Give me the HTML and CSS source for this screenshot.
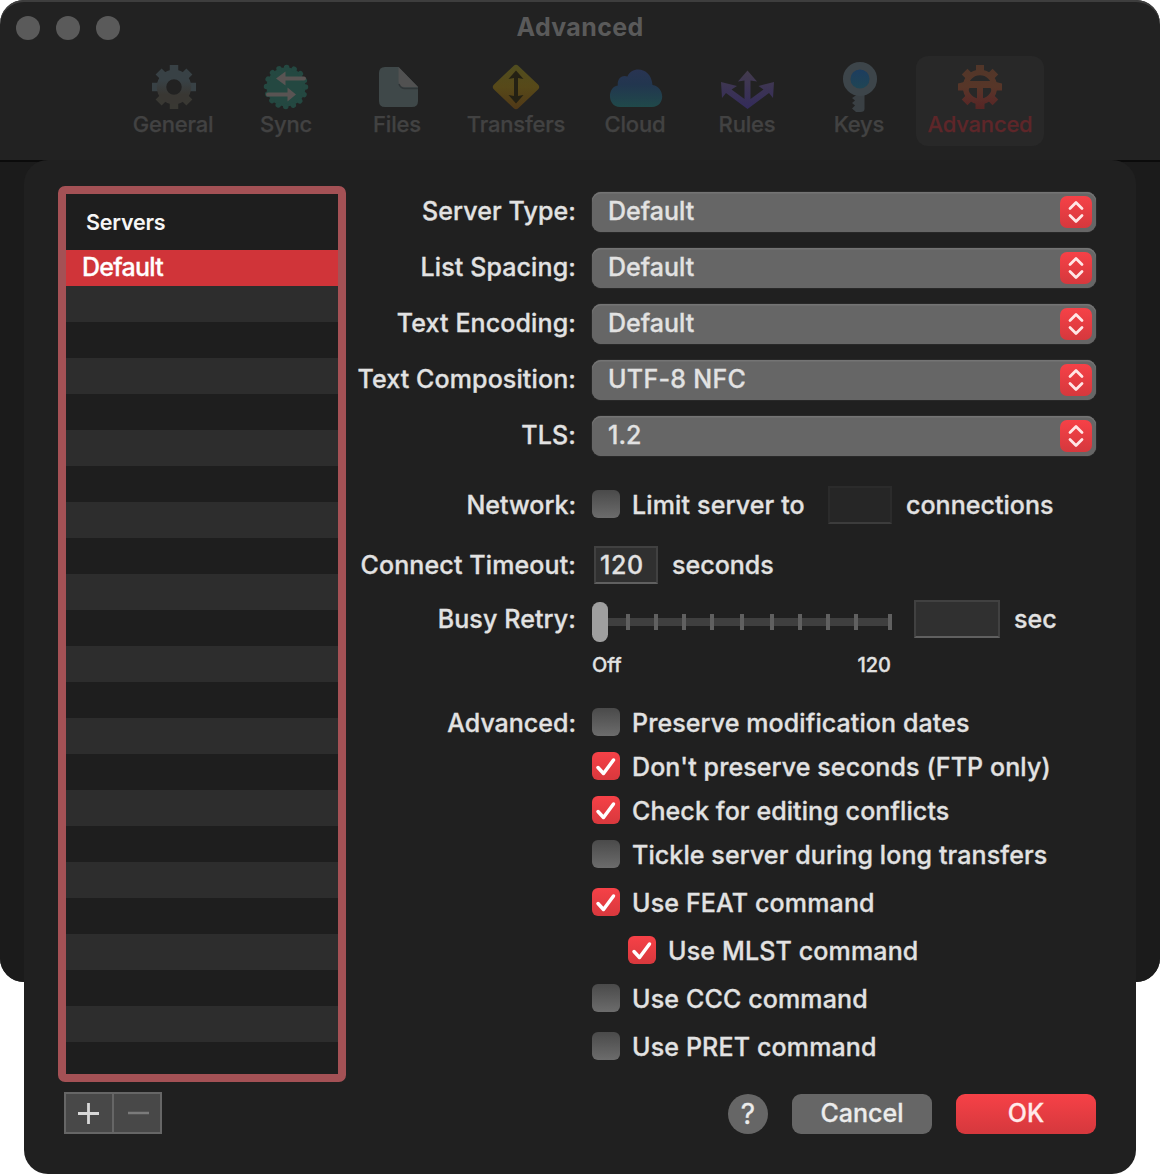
FILE: index.html
```
<!DOCTYPE html>
<html lang="en">
<head>
<meta charset="utf-8">
<title>Advanced</title>
<link rel="stylesheet" href="styles.css">
</head>
<body>
<main class="stage">
  <section class="window">
    <header class="titlebar">
      <div class="lights"><i class="light"></i><i class="light"></i><i class="light"></i></div>
      <h1 class="title">Advanced</h1>
    </header>
    <nav class="toolbar">
      <div class="tab tab-general">
        <svg class="icon" viewBox="0 0 56 56"><defs><linearGradient id="gg" x1="0" y1="0" x2="0" y2="1"><stop offset="0.25" stop-color="#384145"/><stop offset="0.8" stop-color="#393733"/></linearGradient></defs>
          <g fill="none" stroke="#384145" stroke-width="8.500" stroke-linecap="butt"><path d="M28 6v10M12.600 12.600l7 7M6 28h10M43.400 12.600l-7 7M40 28h10"/><path d="M28 40v10M12.600 43.400l7-7M43.400 43.400l-7-7" stroke="#393833"/></g>
          <circle cx="28" cy="28" r="12.500" fill="none" stroke="url(#gg)" stroke-width="9.500"/></svg>
        <span class="tab-label">General</span>
      </div>
      <div class="tab tab-sync">
        <svg class="icon" viewBox="0 0 56 56"><circle cx="28" cy="28" r="19.500" fill="#244841"/><circle cx="28" cy="28" r="19.500" fill="none" stroke="#244841" stroke-width="5.500" stroke-linecap="round" stroke-dasharray="0.100 7.558"/>
          <path d="M18 19.500l9.500-7v5H46q2 0 2 2t-2 2H27.500v5zM38 35.500l-8.500-7v5H10q-2 0-2 2t2 2h19.500v5z" fill="#595453"/></svg>
        <span class="tab-label">Sync</span>
      </div>
      <div class="tab tab-files">
        <svg class="icon" viewBox="0 0 56 56"><path d="M16 8h13.500L49 28v14q0 6-6 6H16q-6 0-6-6V14q0-6 6-6z" fill="#3f4849"/><path d="M29.500 8L49 28H35q-5.500 0-5.500-6z" fill="#515151"/><path d="M30 25q1.500 4.500 6 4.500h13" fill="none" stroke="#303638" stroke-width="1.500"/></svg>
        <span class="tab-label">Files</span>
      </div>
      <div class="tab tab-transfers">
        <svg class="icon" viewBox="0 0 56 56"><defs><linearGradient id="gt" x1="0" y1="0" x2="0" y2="1"><stop offset="0" stop-color="#504d1f"/><stop offset="0.5" stop-color="#574919"/><stop offset="1" stop-color="#503817"/></linearGradient></defs>
          <path d="M25.500 7q2.500-2.500 5 0L50 25.500q2.500 2.500 0 5L30.500 49q-2.500 2.500-5 0L6 30.500q-2.500-2.500 0-5z" fill="url(#gt)"/><path d="M28 11.500l7.500 8.500-5.500-1v18l5.500-1L28 44.500 20.500 36l5.500 1V19l-5.500 1z" fill="#242114"/></svg>
        <span class="tab-label">Transfers</span>
      </div>
      <div class="tab tab-cloud">
        <svg class="icon" viewBox="0 0 56 56"><defs><linearGradient id="gc" x1="0" y1="0" x2="0" y2="1"><stop offset="0" stop-color="#293452"/><stop offset="0.400" stop-color="#22364f"/><stop offset="1" stop-color="#20494a"/></linearGradient></defs>
          <path d="M13 48C0 48 0 28 10.800 26.500 10 19 15.500 15.500 20.500 17.500c4-10.500 23.500-10 25 8.500 13 2 13 22-.5 22z" fill="url(#gc)"/></svg>
        <span class="tab-label">Cloud</span>
      </div>
      <div class="tab tab-rules">
        <svg class="icon" viewBox="0 0 56 56"><defs><linearGradient id="gr" x1="0" y1="12" x2="0" y2="50" gradientUnits="userSpaceOnUse"><stop offset="0" stop-color="#433b4d"/><stop offset="1" stop-color="#332b5b"/></linearGradient></defs>
          <path d="M28.500 11.500l9.500 11-6.500-1v18.500l13-9.500-5-3.500L55 23l-1 16-4-5L28.500 50 7 34l-4 5L2 23l16 4-5.500 3.500L25.500 40V21.500l-6.500 1z" fill="url(#gr)"/></svg>
        <span class="tab-label">Rules</span>
      </div>
      <div class="tab tab-keys">
        <svg class="icon" viewBox="0 0 56 56"><defs><linearGradient id="gk" x1="0" y1="0" x2="0" y2="1"><stop offset="0" stop-color="#1c3b61"/><stop offset="1" stop-color="#204752"/></linearGradient></defs>
          <path d="M25.500 32h8v18q0 3-4 3h-4.500l-4-3.500 3-3-3-2.500 3-2.500-3-2.500 4.500-3z" fill="#3a4044"/><circle cx="29" cy="20" r="13.300" fill="url(#gk)" stroke="#3d454a" stroke-width="7.500"/></svg>
        <span class="tab-label">Keys</span>
      </div>
      <div class="tab tab-advanced">
        <svg class="icon" viewBox="0 0 56 56"><defs><linearGradient id="ga" x1="0" y1="6" x2="0" y2="50" gradientUnits="userSpaceOnUse"><stop offset="0" stop-color="#513629"/><stop offset="0.500" stop-color="#573628"/><stop offset="0.750" stop-color="#592d28"/><stop offset="1" stop-color="#562524"/></linearGradient></defs>
          <g fill="none" stroke="url(#ga)"><circle cx="28" cy="28" r="14.500" stroke-width="5.500"/><path d="M12.600 12.600l6 6M43.400 12.600l-6 6M12.600 43.400l6-6M43.400 43.400l-6-6" stroke-width="8"/></g><path d="M24 6h8v9h-8zM25 26h6v14h1.500v10h-9V40H25zM6 24.500l10-2.500h24l10 2.500v7H40l-1.500-2.500h-21L16 31.500H6z" fill="url(#ga)"/></svg>
        <span class="tab-label">Advanced</span>
      </div>
    </nav>
    <div class="window-body"></div>
  </section>

  <section class="sheet">
    <div class="content">
      <div class="servers">
        <div class="servers-head">Servers</div>
        <div class="server selected">Default</div>
        <div class="stripes"></div>
      </div>
      <form class="form">
        <div class="row row-select"><label class="name">Server Type:</label><div class="select"><span class="val">Default</span><span class="stepper"><svg viewBox="0 0 32 32"><path d="M10 12.500l6-6 6 6M10 19.500l6 6 6-6"/></svg></span></div></div>
        <div class="row row-select"><label class="name">List Spacing:</label><div class="select"><span class="val">Default</span><span class="stepper"><svg viewBox="0 0 32 32"><path d="M10 12.500l6-6 6 6M10 19.500l6 6 6-6"/></svg></span></div></div>
        <div class="row row-select"><label class="name">Text Encoding:</label><div class="select"><span class="val">Default</span><span class="stepper"><svg viewBox="0 0 32 32"><path d="M10 12.500l6-6 6 6M10 19.500l6 6 6-6"/></svg></span></div></div>
        <div class="row row-select"><label class="name">Text Composition:</label><div class="select"><span class="val val-utf">UTF-8 NFC</span><span class="stepper"><svg viewBox="0 0 32 32"><path d="M10 12.500l6-6 6 6M10 19.500l6 6 6-6"/></svg></span></div></div>
        <div class="row row-select"><label class="name">TLS:</label><div class="select"><span class="val">1.2</span><span class="stepper"><svg viewBox="0 0 32 32"><path d="M10 12.500l6-6 6 6M10 19.500l6 6 6-6"/></svg></span></div></div>

        <div class="row row-network"><label class="name name-tight">Network:</label><div class="line"><i class="check"></i><span class="check-text limit">Limit server to</span><span class="field field-dim"></span><span class="unit">connections</span></div></div>
        <div class="row row-timeout"><label class="name">Connect Timeout:</label><div class="line"><span class="field field-timeout">120</span><span class="unit">seconds</span></div></div>
        <div class="row row-busy"><label class="name">Busy Retry:</label><div class="line">
          <svg class="slider" viewBox="0 0 300 42"><path d="M8 17h290v8H8z" fill="#3f3f3f"/><path d="M36 13v16M64 13v16M92 13v16M120 13v16M150 13v16M180 13v16M208 13v16M236 13v16M264 13v16M298 13v16" stroke="#606060" stroke-width="4"/><rect x="0" y="1" width="16" height="40" rx="7.500" fill="#9f9f9f"/></svg>
          <span class="field field-busy"></span><span class="unit">sec</span></div></div>
        <div class="scale"><span>Off</span><span>120</span></div>

        <div class="row row-advanced"><label class="name name-tight">Advanced:</label>
          <div class="checks">
            <div class="option"><i class="check"></i><span class="check-text">Preserve modification dates</span></div>
            <div class="option"><i class="check on"><svg viewBox="0 0 28 28"><path d="M6 15.500l5.500 6L21.500 8"/></svg></i><span class="check-text">Don't preserve seconds (FTP only)</span></div>
            <div class="option"><i class="check on"><svg viewBox="0 0 28 28"><path d="M6 15.500l5.500 6L21.500 8"/></svg></i><span class="check-text">Check for editing conflicts</span></div>
            <div class="option"><i class="check"></i><span class="check-text">Tickle server during long transfers</span></div>
            <div class="option wide"><i class="check on"><svg viewBox="0 0 28 28"><path d="M6 15.500l5.500 6L21.500 8"/></svg></i><span class="check-text">Use FEAT command</span></div>
            <div class="option wide nested"><i class="check on"><svg viewBox="0 0 28 28"><path d="M6 15.500l5.500 6L21.500 8"/></svg></i><span class="check-text">Use MLST command</span></div>
            <div class="option wide"><i class="check"></i><span class="check-text">Use CCC command</span></div>
            <div class="option wide"><i class="check"></i><span class="check-text">Use PRET command</span></div>
          </div>
        </div>
      </form>
    </div>
    <footer class="footer">
      <div class="segments">
        <svg viewBox="0 0 98 42"><path d="M14 21.500h21M24.500 11v21" stroke="#d8d8d8" stroke-width="2.800"/><path d="M49 1v40" stroke="#666" stroke-width="2"/><path d="M64 21h21" stroke="#7b7b7b" stroke-width="2.500"/></svg>
      </div>
      <div class="buttons"><button class="help">?</button><button class="btn">Cancel</button><button class="btn ok">OK</button></div>
    </footer>
  </section>
</main>
</body>
</html>
```
FILE: styles.css
```
* { box-sizing: border-box; }
body { margin: 0; background: #fff; font-family: Inter, "Liberation Sans", sans-serif; font-size: 25px; font-weight: 500; letter-spacing: .1px; color: #e2e2e2; }
.stage { position: relative; width: 1160px; height: 1174px; overflow: hidden; }

.window { width: 1160px; height: 982px; border-radius: 24px; background: #222; overflow: hidden; display: flex; flex-direction: column; box-shadow: inset 0 2px 0 #3e3e3e; }
.titlebar { display: grid; grid-template-columns: 200px 1fr 200px; align-items: center; height: 56px; padding: 0 16px; }
.lights { display: flex; gap: 16px; }
.light { width: 24px; height: 24px; border-radius: 50%; background: #5a5a5a; }
.title { margin: 0; padding-bottom: 2px; text-align: center; font-size: 25px; line-height: 52px; font-weight: 700; letter-spacing: .35px; color: #5a5a5a; }
.toolbar { display: flex; height: 104px; padding-left: 116px; align-items: flex-start; }
.tab { display: flex; flex-direction: column; align-items: center; height: 90px; padding-top: 3px; border-radius: 12px; color: #424242; font-size: 22px; letter-spacing: -.2px; line-height: 28px; -webkit-text-stroke: .25px; }
.icon { width: 56px; height: 56px; display: block; }
.tab-label { margin-top: -5px; white-space: nowrap; }
.tab-general { width: 114px; }
.tab-general .icon { margin-left: 2px; }
.tab-sync { width: 112px; }
.tab-files { width: 110px; }
.tab-transfers { width: 128px; }
.tab-cloud { width: 110px; }
.tab-rules { width: 114px; }
.tab-keys { width: 110px; }
.tab-advanced { width: 128px; background: #282828; color: #5e2629; margin-left: 2px; }
.window-body { flex: 1; background: #1b1b1b; border-top: 2px solid #0b0b0b; }

.sheet { position: absolute; left: 24px; top: 160px; width: 1112px; height: 1014px; border-radius: 24px; background: #202020; padding: 26px 40px 40px 34px; display: flex; flex-direction: column; justify-content: space-between; -webkit-text-stroke: .3px; }
.content { display: flex; }
.servers { width: 288px; height: 896px; border: 8px solid #a45155; border-radius: 7px; background: #1e1e1e; display: flex; flex-direction: column; }
.servers-head { height: 56px; padding-left: 20px; line-height: 57px; font-size: 21.500px; font-weight: 600; letter-spacing: -.2px; color: #f6f6f6; -webkit-text-stroke: 0; }
.server { height: 36px; padding-left: 16px; line-height: 35px; color: #fff; letter-spacing: -.75px; }
.selected { background: #d03439; }
.stripes { flex: 1; background: repeating-linear-gradient(#2d2d2d 0 36px, #1e1e1e 36px 72px); }

.form { flex: 1; padding-top: 6px; }
.row { display: grid; grid-template-columns: 230px 504px; column-gap: 16px; }
.name { text-align: right; white-space: nowrap; line-height: 38px; letter-spacing: .12px; }
.name-tight { letter-spacing: 0; }
.row-select { height: 40px; margin-bottom: 16px; }
.select { display: flex; justify-content: space-between; align-items: center; height: 40px; border-radius: 9px; padding: 0 4px 0 16px; background: #666; box-shadow: inset 0 1.500px 0 #747474, 0 0 1px #777; }
.val { line-height: 38px; margin-top: -2px; letter-spacing: 0; }
.val-utf { letter-spacing: .3px; }
.stepper { width: 32px; height: 32px; border-radius: 7px; background: linear-gradient(#f64147, #d5383d); }
.stepper svg { display: block; fill: none; stroke: #ffe6e6; stroke-width: 2.800; stroke-linecap: round; stroke-linejoin: round; }
.line { display: flex; align-items: center; height: 38px; white-space: nowrap; }
.row-network { margin-top: 30px; height: 60px; }
.row-network .check { margin-top: -2px; }
.row-timeout { height: 54px; }
.row-busy { height: 52px; }
.check { flex: none; display: block; width: 28px; height: 28px; border-radius: 6px; background: linear-gradient(#4a4a4a, #6c6c6c); }
.check.on { background: linear-gradient(#f64147, #d8383d); }
.check svg { display: block; fill: none; stroke: #fff; stroke-width: 3.500; stroke-linecap: round; stroke-linejoin: round; }
.check-text { margin-left: 12px; }
.limit { width: 196px; letter-spacing: .15px; }
.field { flex: none; height: 38px; width: 64px; background: #303030; border: 2px solid #414141; border-bottom-color: #606060; line-height: 35px; padding-left: 4px; }
.field-dim { background: #262626; border-color: #2b2b2b; border-bottom-color: #3c3c3c; }
.field-timeout { margin-left: 2px; letter-spacing: .6px; }
.field-busy { width: 86px; margin-left: 22px; }
.slider { flex: none; width: 300px; height: 42px; margin-top: 6px; }
.unit { margin-left: 14px; letter-spacing: .03px; }
.scale { display: flex; justify-content: space-between; width: 299px; margin-left: 246px; font-size: 20px; line-height: 26px; letter-spacing: 0; }
.row-advanced { margin-top: 26px; }
.option { display: flex; align-items: center; height: 38px; margin-bottom: 6px; white-space: nowrap; }
.option .check { margin-top: -2px; }
.option:nth-child(4) { margin-bottom: 10px; }
.wide { margin-bottom: 10px; }
.wide .check-text { letter-spacing: .15px; }
.nested { margin-left: 36px; }

.footer { display: flex; justify-content: space-between; align-items: center; height: 42px; padding-left: 6px; }
.segments { width: 98px; height: 42px; background: #484848; box-shadow: inset 0 0 0 2px #666; }
.segments svg { display: block; }
.buttons { display: flex; gap: 24px; padding-top: 2px; }
.btn, .help { border: 0; padding: 0; height: 40px; font: inherit; letter-spacing: 0; line-height: 38px; color: #ececec; background: #666; }
.btn { width: 140px; border-radius: 9px; padding-bottom: 2px; }
.ok { background: linear-gradient(#f64147, #d5383d); color: #ffeaea; }
.help { width: 40px; border-radius: 50%; font-size: 28px; font-weight: 400; }
```
